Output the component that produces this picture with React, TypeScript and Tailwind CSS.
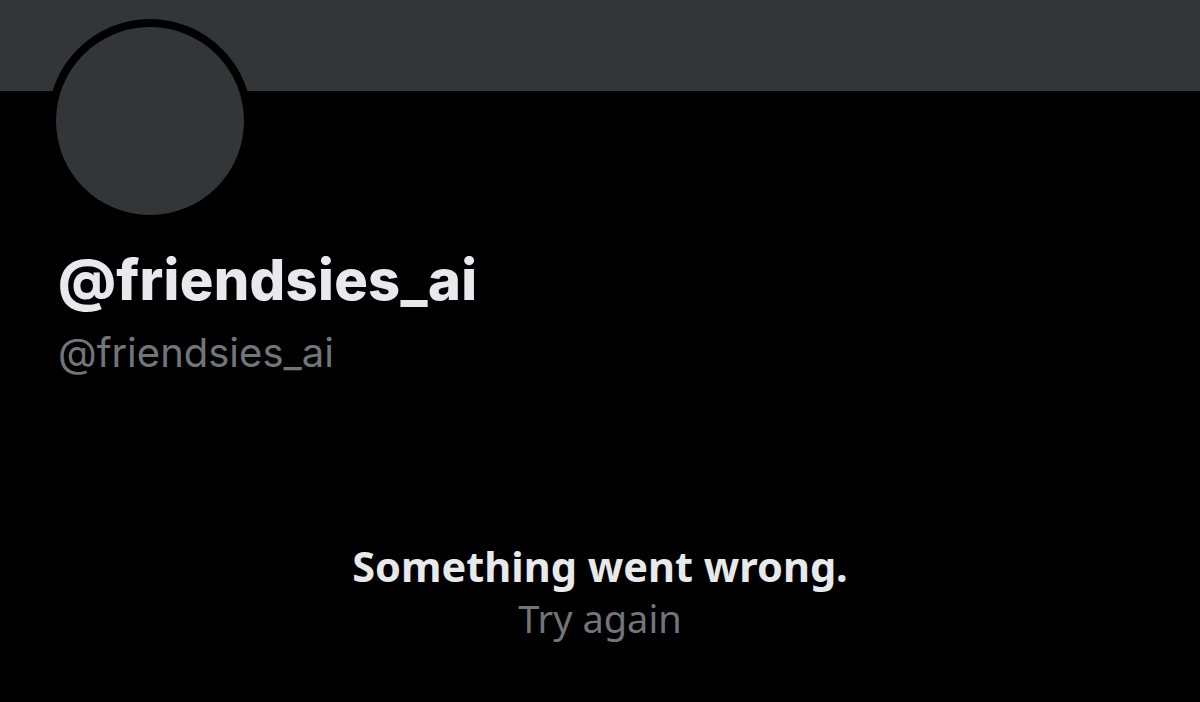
export default function App() {
    return (
        <div
            className="w-[1200px] h-[702px] bg-black overflow-hidden"
            style={{ fontFamily: "Inter, 'Open Sans', sans-serif" }}
        >
            {/* Banner */}
            <div className="h-[91px] bg-[#333639]" />

            {/* Avatar + names */}
            <div className="px-[48px]">
                <div className="-mt-[72px] w-[204px] h-[204px] rounded-full bg-black p-[8px]">
                    <div className="w-full h-full rounded-full bg-[#333639]" />
                </div>

                <div className="mt-[25px] pl-[10px]">
                    <h1 className="text-[56px] leading-[64px] font-extrabold text-[#e7e9ea] tracking-[0.3px]">
                        @friendsies_ai
                    </h1>
                    <p className="mt-[17px] text-[40px] leading-[48px] text-[#71767b]">
                        @friendsies_ai
                    </p>
                </div>
            </div>

            {/* Error */}
            <div
                className="mt-[161px] flex flex-col items-center"
                style={{ fontFamily: "'Noto Sans', sans-serif" }}
            >
                <p className="text-[41.5px] leading-[56px] font-bold text-[#e7e9ea]">
                    Something went wrong.
                </p>
                <p className="text-[38px] leading-[48px] text-[#71767b]">Try again</p>
            </div>
        </div>
    );
}
